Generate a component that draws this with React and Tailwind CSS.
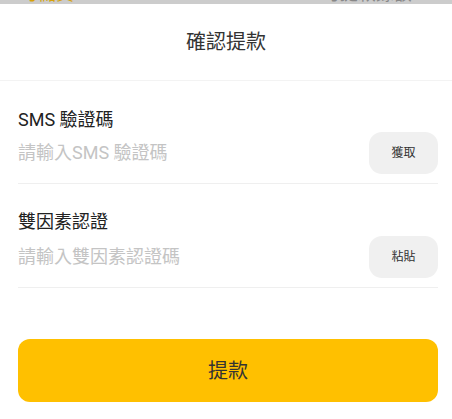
export default function App() {
  const font = { fontFamily: 'Roboto, "Noto Sans CJK TC", "Noto Sans", sans-serif' };
  return (
    <div className="w-[452px] h-[419px] bg-white overflow-hidden" style={font}>
      <div className="h-[4px] overflow-hidden bg-[#cccccc]">
        <div className="flex justify-between pl-[20px] pr-[12px] mt-[-15px] text-[18px] leading-[18px]">
          <span className="text-[#d6a20a]">可儲資 0%</span>
          <span className="text-[#888]">可提款餘額：0</span>
        </div>
      </div>
      <div className="h-[77px] flex items-center justify-center border-b border-[#f3f3f3]">
        <span className="text-[20px] text-[#333] leading-none">確認提款</span>
      </div>
      <div className="pl-[18px] pr-[14px] pt-[27px]">
        <div className="border-b border-[#efefef] pb-[9px]">
          <div className="text-[18px] text-[#222] leading-[24px]">SMS 驗證碼</div>
          <div className="flex items-center justify-between">
            <span className="text-[18px] text-[#c4c4c4] leading-[24px]">請輸入SMS 驗證碼</span>
            <button className="w-[69px] h-[42px] rounded-[13px] bg-[#f0f0f0] text-[12px] text-[#333]">獲取</button>
          </div>
        </div>
        <div className="border-b border-[#efefef] pb-[9px] pt-[26px]">
          <div className="text-[18px] text-[#222] leading-[24px]">雙因素認證</div>
          <div className="flex items-center justify-between mt-[2px]">
            <span className="text-[18px] text-[#c4c4c4] leading-[24px]">請輸入雙因素認證碼</span>
            <button className="w-[69px] h-[42px] rounded-[13px] bg-[#f0f0f0] text-[12px] text-[#333]">粘貼</button>
          </div>
        </div>
        <button className="mt-[51px] w-full h-[63px] rounded-[12px] bg-[#ffc000] text-[20px] text-[#333]">提款</button>
      </div>
    </div>
  );
}
